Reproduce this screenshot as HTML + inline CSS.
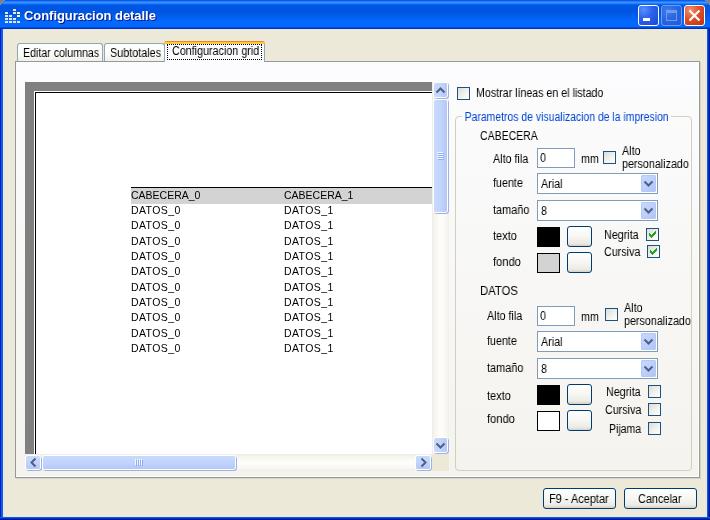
<!DOCTYPE html>
<html lang="es">
<head>
<meta charset="utf-8">
<title>Configuracion detalle</title>
<style>
html,body{margin:0;padding:0;}
body{width:710px;height:520px;overflow:hidden;background:#ECE9D8;position:relative;
 font-family:"Liberation Sans",sans-serif;font-size:11px;color:#000;letter-spacing:-0.25px;}
.a{position:absolute;}
.t{position:absolute;white-space:nowrap;font-size:12px;letter-spacing:0;line-height:13px;height:13px;will-change:transform;transform:scaleX(0.895);transform-origin:0 0;}
/* window chrome */
#title{left:0;top:0;width:710px;height:29px;
 background:linear-gradient(to bottom,#0046E0 0px,#1A6CF5 1px,#3D95FF 2.5px,#2080FF 3.5px,#0566F5 4.5px,#0058E8 5.5px,#0055E0 8px,#0057E4 13px,#0060F0 17px,#0468FF 22px,#0468FF 26.5px,#0050E0 27.5px,#0030C0 28.5px,#0030C0 29px);}
#bl{left:0;top:29px;width:3px;height:491px;background:linear-gradient(to right,#0019CF 0,#0019CF 1px,#0A5BE6 1px,#0C60EA 3px);}
#br{left:707px;top:29px;width:3px;height:491px;background:linear-gradient(to right,#0A5BE6 0,#0A5BE6 1px,#0030D0 1px,#0030D0 2px,#001590 2px);}
#bb{left:0;top:517px;width:710px;height:3px;background:linear-gradient(to bottom,#0A5BE6 0,#0A5BE6 1px,#0030D0 1px,#0030D0 2px,#001590 2px);}
#ttext{transform:none;left:24px;top:8px;font-family:"Liberation Sans",sans-serif;font-weight:bold;font-size:13px;line-height:16px;height:16px;color:#fff;letter-spacing:-0.05px;text-shadow:1px 1px 0 #0A1883;}
.cb{position:absolute;top:5px;width:21px;height:21px;box-sizing:border-box;border:1px solid #fff;border-radius:3px;}
#bmin{left:638px;background:radial-gradient(circle at 25% 20%,#5A8FFA 0,#2E63EE 40%,#1846D6 100%);}
#bmax{left:661px;background:radial-gradient(circle at 30% 25%,#3D7DF0 0,#2A66E2 45%,#2258D8 100%);border-color:#6C9CF0;}
#bclose{left:684px;background:radial-gradient(circle at 28% 22%,#F09070 0,#E04E28 45%,#BC300C 100%);}
/* tabs */
.tab{position:absolute;box-sizing:border-box;border:1px solid #91A7B4;border-bottom:none;border-radius:3px 3px 0 0;
 background:linear-gradient(to bottom,#FFFFFF 0,#FAFAF7 60%,#EEEEE6 100%);}
#pane{left:15px;top:61px;width:685px;height:417px;box-sizing:border-box;border:1px solid #919B9C;background:linear-gradient(to bottom,#FCFCFE 0,#F4F3EE 100%);
 box-shadow:inset -1px -1px 0 #FFFFFF,1px 1px 0 #D6D3C6;}
/* scroll */
.sbtn{position:absolute;width:17px;height:17px;box-sizing:border-box;border:1px solid #fff;border-radius:3px;
 background:linear-gradient(135deg,#CADAFD 0,#BDCFFB 50%,#AEC2F6 100%);box-shadow:inset 0 0 0 1px #B7CAF5;}
.sv{position:absolute;width:13px;border-radius:2px;background:linear-gradient(to right,#C9D9FD 0,#C3D4FC 50%,#B3C7F8 100%);box-shadow:0 0 0 1px #fff,1px 1px 0 1px #9FB3DE;}
.sh{position:absolute;height:13px;border-radius:2px;background:linear-gradient(to bottom,#C9D9FD 0,#C3D4FC 50%,#B3C7F8 100%);box-shadow:0 0 0 1px #fff,1px 1px 0 1px #9FB3DE;}
.thumb{position:absolute;box-sizing:border-box;border:1px solid #fff;border-radius:3px;box-shadow:inset 0 0 0 1px #B7CAF5;}
/* form */
.chk{position:absolute;width:13px;height:13px;box-sizing:border-box;border:1px solid #1C5180;
 background:linear-gradient(135deg,#DCDCD7 0,#F3F3EF 60%,#FFFFFF 100%);}
.inp{position:absolute;box-sizing:border-box;border:1px solid #7F9DB9;background:#fff;}
.cbtn{position:absolute;width:15px;height:17px;border-radius:2px;right:1px;top:1px;
 background:linear-gradient(135deg,#CADAFD 0,#BDCFFB 50%,#AEC2F6 100%);box-shadow:inset 0 0 0 1px #B4C8F6;}
.btn{position:absolute;box-sizing:border-box;border:1px solid #003C74;border-radius:3px;
 background:linear-gradient(to bottom,#FFFFFF 0,#F6F6F2 50%,#ECEBE5 85%,#D6D0C5 100%);}
.col{position:absolute;box-sizing:border-box;}
.g{position:absolute;will-change:transform;white-space:nowrap;font-size:10.5px;letter-spacing:0;line-height:13px;height:13px;}
.d{letter-spacing:0.4px;}
</style>
</head>
<body>
<!-- window frame -->
<div class="a" id="title"></div>
<div class="a" id="bl"></div>
<div class="a" id="br"></div>
<div class="a" id="bb"></div>
<div class="a" style="left:0;top:0;width:5px;height:1px;background:linear-gradient(to right,#808080 0,#808080 3px,#A09878 5px)"></div>
<div class="a" style="left:0;top:1px;width:3px;height:1px;background:linear-gradient(to right,#808080 0,#808080 2px,#A09878 3px)"></div>
<div class="a" style="left:0;top:2px;width:2px;height:1px;background:linear-gradient(to right,#808080 0,#808080 1px,#A09878 2px)"></div>
<div class="a" style="left:0;top:3px;width:1px;height:2px;background:linear-gradient(to bottom,#848480 0,#A09878 2px)"></div>
<div class="a" style="left:705px;top:0;width:5px;height:1px;background:linear-gradient(to left,#808080 0,#808080 3px,#A09878 5px)"></div>
<div class="a" style="left:707px;top:1px;width:3px;height:1px;background:linear-gradient(to left,#808080 0,#808080 2px,#A09878 3px)"></div>
<div class="a" style="left:708px;top:2px;width:2px;height:1px;background:linear-gradient(to left,#808080 0,#808080 1px,#A09878 2px)"></div>
<div class="a" style="left:709px;top:3px;width:1px;height:2px;background:linear-gradient(to bottom,#848480 0,#A09878 2px)"></div>
<!-- icon -->
<svg class="a" style="left:5px;top:9px" width="16" height="15" viewBox="0 0 16 15" shape-rendering="crispEdges">
 <g fill="#E4E6E8">
  <rect x="8" y="0" width="3" height="2"/>
  <rect x="0" y="3" width="3" height="2"/><rect x="8" y="3" width="3" height="2"/><rect x="12" y="3" width="3" height="2" fill="#FFF3CC"/>
  <rect x="0" y="6" width="3" height="2"/><rect x="4" y="6" width="3" height="2"/><rect x="12" y="6" width="3" height="2" fill="#FFF3CC"/>
  <rect x="0" y="9" width="3" height="2"/><rect x="4" y="9" width="3" height="2"/><rect x="8" y="9" width="3" height="2"/>
  <rect x="0" y="12" width="3" height="2"/><rect x="4" y="12" width="3" height="2"/><rect x="8" y="12" width="3" height="2"/><rect x="12" y="12" width="3" height="2"/>
 </g>
</svg>
<div class="t" id="ttext">Configuracion detalle</div>
<!-- caption buttons -->
<div class="cb" id="bmin"><div class="a" style="left:4px;top:12px;width:7px;height:3px;background:#fff"></div></div>
<div class="cb" id="bmax"><div class="a" style="left:4px;top:4px;width:11px;height:11px;box-sizing:border-box;border:1px solid #6F9BEF;border-top-width:3px"></div></div>
<div class="cb" id="bclose"><svg class="a" style="left:0;top:0" width="19" height="19" viewBox="0 0 19 19"><path d="M4.5 4.5 L14.5 14.5 M14.5 4.5 L4.5 14.5" stroke="#fff" stroke-width="2.2" fill="none"/></svg></div>

<!-- tabs -->
<div class="tab" style="left:17px;top:43px;width:86px;height:19px"></div>
<div class="t" style="left:23px;top:47px;transform:scaleX(0.885)">Editar columnas</div>
<div class="tab" style="left:104px;top:43px;width:61px;height:19px"></div>
<div class="t" style="left:110px;top:47px;transform:scaleX(0.9)">Subtotales</div>
<div class="a" id="pane"></div>
<div class="tab" style="left:164px;top:41px;width:101px;height:21px;background:#FCFCFE;border-top:none;z-index:2">
 <div class="a" style="left:-1px;top:0;width:101px;height:3px;border-radius:3px 3px 0 0;background:linear-gradient(to bottom,#E68B2C 0,#E68B2C 1px,#FFC73C 1px,#FFC73C 3px)"></div>
 <div class="a" style="left:2px;top:3px;width:95px;height:16px;box-sizing:border-box;border:1px dotted #000"></div>
</div>
<div class="t" style="left:172px;top:45px;z-index:3">Configuracion grid</div>

<!-- preview area -->
<div class="a" style="left:25px;top:82px;width:407px;height:372px;background:#808080;overflow:hidden">
 <div class="a" style="left:9px;top:9px;width:420px;height:400px;background:#fff"><div class="a" style="left:1px;top:1px;width:430px;height:400px;border-left:1px solid #000;border-top:1px solid #000"></div></div>
 <div class="a" style="left:106px;top:105px;width:320px;height:1px;background:#000"></div>
 <div class="a" style="left:106px;top:106px;width:320px;height:16px;background:#D3D3D3"></div>
</div>
<div id="grid"></div>
<!-- vertical scrollbar -->
<div class="a" style="left:432px;top:82px;width:17px;height:372px;background:linear-gradient(to right,#EEEDE5 0,#F6F5F0 3px,#FEFEFB 9px,#F8F7F3 14px,#F0EFE8 17px)"></div>
<div class="sv" style="left:434px;top:83px;height:14px"><svg class="a" style="left:-2px;top:-1px" width="17" height="17" viewBox="0 0 17 17"><path d="M4.5 10.5 L8.5 6.5 L12.5 10.5" stroke="#4D6185" stroke-width="2" fill="none"/></svg></div>
<div class="sv" style="left:434px;top:100px;height:112px"><div class="a" style="left:3px;top:52px;width:6px;height:8px;background:repeating-linear-gradient(to bottom,#F2F6FE 0,#F2F6FE 1px,transparent 1px,transparent 2px)"></div><div class="a" style="left:4px;top:53px;width:6px;height:8px;background:repeating-linear-gradient(to bottom,#8CB0F8 0,#8CB0F8 1px,transparent 1px,transparent 2px)"></div></div>
<div class="sv" style="left:434px;top:438px;height:14px"><svg class="a" style="left:-2px;top:-1px" width="17" height="17" viewBox="0 0 17 17"><path d="M4.5 6.5 L8.5 10.5 L12.5 6.5" stroke="#4D6185" stroke-width="2" fill="none"/></svg></div>
<!-- horizontal scrollbar -->
<div class="a" style="left:25px;top:454px;width:407px;height:17px;background:linear-gradient(to bottom,#EEEDE5 0,#F6F5F0 3px,#FEFEFB 9px,#F8F7F3 14px,#F0EFE8 17px)"></div>
<div class="sh" style="left:26px;top:456px;width:14px"><svg class="a" style="left:-1px;top:-2px" width="17" height="17" viewBox="0 0 17 17"><path d="M10.5 4.5 L6.5 8.5 L10.5 12.5" stroke="#4D6185" stroke-width="2" fill="none"/></svg></div>
<div class="sh" style="left:43px;top:456px;width:192px"><div class="a" style="left:92px;top:3px;width:8px;height:6px;background:repeating-linear-gradient(to right,#F2F6FE 0,#F2F6FE 1px,transparent 1px,transparent 2px)"></div><div class="a" style="left:93px;top:4px;width:8px;height:6px;background:repeating-linear-gradient(to right,#8CB0F8 0,#8CB0F8 1px,transparent 1px,transparent 2px)"></div></div>
<div class="sh" style="left:416px;top:456px;width:14px"><svg class="a" style="left:-1px;top:-2px" width="17" height="17" viewBox="0 0 17 17"><path d="M6.5 4.5 L10.5 8.5 L6.5 12.5" stroke="#4D6185" stroke-width="2" fill="none"/></svg></div>
<div class="a" style="left:432px;top:454px;width:17px;height:17px;background:#ECE9D8"></div>

<!-- right panel -->
<div class="chk" style="left:457px;top:87px"></div>
<div class="t" style="left:476px;top:87px;transform:scaleX(0.888)">Mostrar líneas en el listado</div>
<div class="a" style="left:455px;top:116px;width:237px;height:355px;box-sizing:border-box;border:1px solid #D0D0BF;border-radius:4px"></div>
<div class="t" style="left:462px;top:111px;background:#FBFBFC;padding:0 2px 0 3px;color:#0046D5;transform:scaleX(0.869)">Parametros de visualizacion de la impresion</div>

<div class="t" style="left:480px;top:130px;transform:scaleX(0.875)">CABECERA</div>
<div class="t" style="left:493px;top:153px">Alto fila</div>
<div class="inp" style="left:537px;top:148px;width:38px;height:20px"><div class="t" style="left:2px;top:3px">0</div></div>
<div class="t" style="left:581px;top:153px">mm</div>
<div class="chk" style="left:603px;top:151px"></div>
<div class="t" style="left:622px;top:145px">Alto</div>
<div class="t" style="left:622px;top:158px">personalizado</div>
<div class="t" style="left:493px;top:177px">fuente</div>
<div class="inp" style="left:537px;top:173px;width:121px;height:21px"><div class="t" style="left:3px;top:4px">Arial</div><div class="cbtn"><svg class="a" style="left:0;top:0" width="15" height="17" viewBox="0 0 15 17"><path d="M3.5 6.5 L7.5 10.5 L11.5 6.5" stroke="#4D6185" stroke-width="2" fill="none"/></svg></div></div>
<div class="t" style="left:493px;top:204px;transform:scaleX(0.91)">tamaño</div>
<div class="inp" style="left:537px;top:200px;width:121px;height:21px"><div class="t" style="left:3px;top:4px">8</div><div class="cbtn"><svg class="a" style="left:0;top:0" width="15" height="17" viewBox="0 0 15 17"><path d="M3.5 6.5 L7.5 10.5 L11.5 6.5" stroke="#4D6185" stroke-width="2" fill="none"/></svg></div></div>
<div class="t" style="left:493px;top:230px;transform:scaleX(0.92)">texto</div>
<div class="col" style="left:537px;top:227px;width:23px;height:20px;background:#000"></div>
<div class="btn" style="left:567px;top:226px;width:25px;height:21px"></div>
<div class="t" style="left:493px;top:256px;transform:scaleX(0.93)">fondo</div>
<div class="col" style="left:537px;top:253px;width:23px;height:20px;background:#D3D3D3;border:1px solid #000"></div>
<div class="btn" style="left:567px;top:252px;width:25px;height:21px"></div>
<div class="t" style="left:604px;top:229px">Negrita</div>
<div class="chk" style="left:646px;top:228px"><svg class="a" style="left:2px;top:2px" width="7" height="7" viewBox="0 0 7 7" shape-rendering="crispEdges"><path d="M0 2h1v3h-1zM1 3h1v3h-1zM2 4h1v3h-1zM3 3h1v3h-1zM4 2h1v3h-1zM5 1h1v3h-1zM6 0h1v3h-1z" fill="#21A121"/></svg></div>
<div class="t" style="left:604px;top:246px">Cursiva</div>
<div class="chk" style="left:647px;top:245px"><svg class="a" style="left:2px;top:2px" width="7" height="7" viewBox="0 0 7 7" shape-rendering="crispEdges"><path d="M0 2h1v3h-1zM1 3h1v3h-1zM2 4h1v3h-1zM3 3h1v3h-1zM4 2h1v3h-1zM5 1h1v3h-1zM6 0h1v3h-1z" fill="#21A121"/></svg></div>

<div class="t" style="left:480px;top:285px;transform:scaleX(0.94)">DATOS</div>
<div class="t" style="left:487px;top:310px">Alto fila</div>
<div class="inp" style="left:537px;top:306px;width:38px;height:20px"><div class="t" style="left:2px;top:3px">0</div></div>
<div class="t" style="left:581px;top:311px">mm</div>
<div class="chk" style="left:605px;top:308px"></div>
<div class="t" style="left:624px;top:302px">Alto</div>
<div class="t" style="left:624px;top:315px">personalizado</div>
<div class="t" style="left:487px;top:335px">fuente</div>
<div class="inp" style="left:537px;top:331px;width:121px;height:21px"><div class="t" style="left:3px;top:4px">Arial</div><div class="cbtn"><svg class="a" style="left:0;top:0" width="15" height="17" viewBox="0 0 15 17"><path d="M3.5 6.5 L7.5 10.5 L11.5 6.5" stroke="#4D6185" stroke-width="2" fill="none"/></svg></div></div>
<div class="t" style="left:487px;top:362px;transform:scaleX(0.91)">tamaño</div>
<div class="inp" style="left:537px;top:358px;width:121px;height:21px"><div class="t" style="left:3px;top:4px">8</div><div class="cbtn"><svg class="a" style="left:0;top:0" width="15" height="17" viewBox="0 0 15 17"><path d="M3.5 6.5 L7.5 10.5 L11.5 6.5" stroke="#4D6185" stroke-width="2" fill="none"/></svg></div></div>
<div class="t" style="left:487px;top:390px;transform:scaleX(0.92)">texto</div>
<div class="col" style="left:537px;top:385px;width:23px;height:20px;background:#000"></div>
<div class="btn" style="left:567px;top:384px;width:25px;height:21px"></div>
<div class="t" style="left:487px;top:413px;transform:scaleX(0.93)">fondo</div>
<div class="col" style="left:537px;top:411px;width:23px;height:20px;background:#fff;border:1px solid #000"></div>
<div class="btn" style="left:567px;top:410px;width:25px;height:21px"></div>
<div class="t" style="left:606px;top:386px">Negrita</div>
<div class="chk" style="left:648px;top:385px"></div>
<div class="t" style="left:605px;top:404px">Cursiva</div>
<div class="chk" style="left:648px;top:403px"></div>
<div class="t" style="left:609px;top:423px;transform:scaleX(0.875)">Pijama</div>
<div class="chk" style="left:648px;top:422px"></div>

<!-- bottom buttons -->
<div class="btn" style="left:543px;top:488px;width:73px;height:21px"></div>
<div class="t" style="left:549px;top:493px;transform:scaleX(0.914)">F9 - Aceptar</div>
<div class="btn" style="left:624px;top:488px;width:73px;height:21px"></div>
<div class="t" style="left:638px;top:493px;transform:scaleX(0.907)">Cancelar</div>

<!-- grid text -->
<div class="g" style="left:131px;top:189px">CABECERA_0</div><div class="g" style="left:284px;top:189px">CABECERA_1</div>
<div class="g d" style="left:131px;top:204px">DATOS_0</div><div class="g d" style="left:284px;top:204px">DATOS_1</div>
<div class="g d" style="left:131px;top:219px">DATOS_0</div><div class="g d" style="left:284px;top:219px">DATOS_1</div>
<div class="g d" style="left:131px;top:235px">DATOS_0</div><div class="g d" style="left:284px;top:235px">DATOS_1</div>
<div class="g d" style="left:131px;top:250px">DATOS_0</div><div class="g d" style="left:284px;top:250px">DATOS_1</div>
<div class="g d" style="left:131px;top:265px">DATOS_0</div><div class="g d" style="left:284px;top:265px">DATOS_1</div>
<div class="g d" style="left:131px;top:281px">DATOS_0</div><div class="g d" style="left:284px;top:281px">DATOS_1</div>
<div class="g d" style="left:131px;top:296px">DATOS_0</div><div class="g d" style="left:284px;top:296px">DATOS_1</div>
<div class="g d" style="left:131px;top:311px">DATOS_0</div><div class="g d" style="left:284px;top:311px">DATOS_1</div>
<div class="g d" style="left:131px;top:327px">DATOS_0</div><div class="g d" style="left:284px;top:327px">DATOS_1</div>
<div class="g d" style="left:131px;top:342px">DATOS_0</div><div class="g d" style="left:284px;top:342px">DATOS_1</div>
</body>
</html>
